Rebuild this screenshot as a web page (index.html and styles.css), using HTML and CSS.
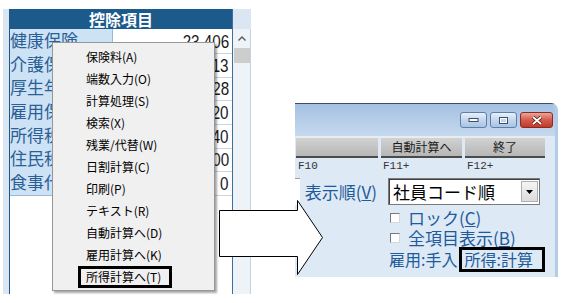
FILE: index.html
```html
<!DOCTYPE html>
<html lang="ja">
<head>
    <meta charset="UTF-8">
    <title>所得計算へ</title>
    <link rel="stylesheet" href="styles.css">
</head>
<body>
<div class="stage">
    <div class="sheet">
        <div class="ledger">
            <div class="ledger-head">控除項目</div>
            <div class="ledger-row"><span class="item">健康保険</span><span class="amount"><span>23,406</span></span></div>
            <div class="ledger-row"><span class="item">介護保険</span><span class="amount"><span>1,613</span></span></div>
            <div class="ledger-row"><span class="item">厚生年金</span><span class="amount"><span>42,828</span></span></div>
            <div class="ledger-row"><span class="item">雇用保険</span><span class="amount"><span>3,120</span></span></div>
            <div class="ledger-row"><span class="item">所得税</span><span class="amount"><span>6,440</span></span></div>
            <div class="ledger-row"><span class="item">住民税</span><span class="amount"><span>12,600</span></span></div>
            <div class="ledger-row"><span class="item">食事代</span><span class="amount"><span>0</span></span></div>
        </div>
        <div class="vscroll">
            <svg width="8" height="5" viewBox="0 0 8 5"><path d="M0.5 4.5 L4 1 L7.5 4.5" fill="none" stroke="#5a5a5a" stroke-width="1.4"/></svg>
            <span class="vscroll-thumb"></span>
        </div>
    </div>

    <div class="win">
        <div class="titlebar">
            <span class="cap-btn">
                <svg width="11" height="6" viewBox="0 0 11 6"><rect x="1" y="1.5" width="9" height="3" fill="#fff" stroke="#3d4f66"/></svg>
            </span>
            <span class="cap-btn">
                <svg width="11" height="9" viewBox="0 0 11 9"><rect x="1.5" y="1.5" width="8" height="6" fill="none" stroke="#3d4f66"/><rect x="2.5" y="2.5" width="6" height="4" fill="none" stroke="#fff"/></svg>
            </span>
            <span class="cap-btn cap-close">
                <svg width="12" height="9" viewBox="0 0 12 9"><path d="M2 1 L10 8 M10 1 L2 8" stroke="#5a1a14" stroke-width="3.4"/><path d="M2 1 L10 8 M10 1 L2 8" stroke="#fff" stroke-width="1.8"/></svg>
            </span>
        </div>
        <div class="fkeys">
            <div class="fkey fkey-10"><div class="fkey-btn"></div><div class="fkey-code">F10</div></div>
            <div class="fkey fkey-11"><div class="fkey-btn">自動計算へ</div><div class="fkey-code">F11+</div></div>
            <div class="fkey fkey-12"><div class="fkey-btn">終了</div><div class="fkey-code">F12+</div></div>
        </div>
        <div class="win-body">
            <div class="sort-label">
                <span class="clipped"></span>
                <span>表示順(<u>V</u>)</span>
            </div>
            <div class="combo">
                <span class="combo-text">社員コード順</span>
                <span class="combo-drop">
                    <svg width="7" height="4" viewBox="0 0 7 4"><path d="M0 0 H7 L3.5 4 Z" fill="#000"/></svg>
                </span>
            </div>
            <div class="opts">
                <div class="opt"><span class="check"></span><span>ロック(<u>C</u>)</span></div>
                <div class="opt"><span class="check"></span><span>全項目表示(<u>B</u>)</span></div>
                <div class="status">
                    <span>雇用:手入</span>
                    <span class="status-mark">所得:計算</span>
                </div>
            </div>
        </div>
    </div>

    <ul class="ctx-menu">
        <li>保険料(A)</li>
        <li>端数入力(O)</li>
        <li>計算処理(S)</li>
        <li>検索(X)</li>
        <li>残業/代替(W)</li>
        <li>日割計算(C)</li>
        <li>印刷(P)</li>
        <li>テキスト(R)</li>
        <li>自動計算へ(D)</li>
        <li>雇用計算へ(K)</li>
        <li><span class="marked">所得計算へ(T)</span></li>
    </ul>

    <svg class="arrow" width="106" height="78" viewBox="0 0 106 78">
        <polygon points="1.5,11.5 79.5,11.5 79.5,1.5 104.5,38.5 79.5,75.5 79.5,57.5 1.5,57.5" fill="#fff" stroke="#000" stroke-width="1"/>
    </svg>
</div>
</body>
</html>
```

FILE: styles.css
```css
body {
    margin: 0;
    background-color: #fff;
    font-family: "Noto Sans CJK JP", sans-serif;
}
.stage {
    position: relative;
    width: 588px;
    height: 303px;
    display: flex;
    align-items: flex-start;
    overflow: hidden;
}

/* left: deduction sheet */
.sheet {
    display: flex;
    margin: 9px 0 0 3px;
    height: 285px;
    padding-left: 6px;
    background-color: #dae7f3;
}
.ledger {
    width: 222px;
    border-left: 1px solid #1d578a;
    border-right: 1px solid #3f6f9e;
    background-color: #fff;
}
.ledger-head {
    height: 20px;
    background-color: #1b5a8b;
    color: #fff;
    font-weight: bold;
    font-size: 16px;
    line-height: 20px;
    text-align: center;
}
.ledger-row {
    display: grid;
    grid-template-columns: 103px 1fr;
    height: 23.7px;
}
.item {
    background-color: #cde2f5;
    border-right: 1px solid #9bb8d6;
    border-bottom: 1px solid #9bb8d6;
    font-size: 17px;
    line-height: 22px;
    color: #2b5f96;
    white-space: nowrap;
}
.amount {
    border-bottom: 1px solid #c5d6e8;
    text-align: right;
    padding-right: 3px;
}
.amount span {
    display: inline-block;
    font-family: "Liberation Sans", sans-serif;
    font-size: 19px;
    line-height: 23px;
    color: #1a1a1a;
    transform: scaleX(0.8);
    transform-origin: right center;
}
.vscroll {
    width: 17px;
    margin-top: 20px;
    align-self: stretch;
    display: flex;
    flex-direction: column;
    align-items: center;
    padding-top: 7px;
    background-color: #eef3f8;
    border-right: 1px solid #c3d3e3;
}
.vscroll svg {
    display: block;
}
.vscroll-thumb {
    width: 16px;
    height: 15px;
    margin-top: 7px;
    background-color: #cdcdcd;
}

/* context menu */
.ctx-menu {
    position: absolute;
    left: 52px;
    top: 42px;
    width: 161px;
    margin: 0;
    padding: 3px 0 2px;
    list-style: none;
    background-color: #f0f0f0;
    border: 1px solid #979797;
    box-shadow: 2px 2px 2px rgba(0, 0, 0, 0.35);
    font-size: 12px;
    color: #000;
}
.ctx-menu li {
    height: 22px;
    line-height: 22px;
    padding-left: 33px;
}
.ctx-menu .marked {
    display: inline-block;
    vertical-align: top;
    line-height: 16px;
    margin-left: -8px;
    padding: 0 8px 0 5px;
    border: 3px solid #000;
}

/* right: window */
.win {
    width: 263px;
    height: 174px;
    margin: 103px 0 0 44px;
    box-sizing: border-box;
    display: flex;
    flex-direction: column;
    overflow: hidden;
    background-color: #dde9f5;
    border-top: 1px solid #404d5c;
    border-right: 3px solid #b3cbe5;
    border-top-right-radius: 7px;
}
.titlebar {
    height: 33px;
    box-sizing: border-box;
    display: flex;
    justify-content: flex-end;
    gap: 3px;
    padding: 8px 2px 0 0;
    background: linear-gradient(#a4c1e3, #c6d9ee);
    border-bottom: 1px solid #e4edf6;
}
.cap-btn {
    width: 27px;
    height: 16px;
    box-sizing: border-box;
    display: flex;
    align-items: center;
    justify-content: center;
    border: 1px solid #5e7fa8;
    border-radius: 3px;
    background: linear-gradient(#e8f0fa, #c3d6ee 50%, #a9c3e4);
}
.cap-close {
    width: 33px;
    border-color: #8a2b22;
    background: linear-gradient(#eaa597, #d35c4d 50%, #c23a2b);
}
.fkeys {
    display: flex;
    gap: 3px;
    padding-left: 1px;
}
.fkey-10 { width: 82px; }
.fkey-11 { width: 81px; }
.fkey-12 { width: 80px; }
.fkey-btn {
    height: 18px;
    background: linear-gradient(#d2d2d2, #b6b6b6);
    border-top: 1px solid #ececec;
    border-bottom: 2px solid #4a4a4a;
    font-size: 12px;
    line-height: 18px;
    text-align: center;
    color: #1a1a1a;
}
.fkey-code {
    margin-top: 1px;
    padding-left: 2px;
    font-family: "Liberation Mono", monospace;
    font-size: 11px;
    line-height: 14px;
    color: #333;
}
.win-body {
    display: grid;
    grid-template-columns: 93px 1fr;
    padding-top: 5px;
    color: #1f5b9a;
    font-size: 17px;
}
.sort-label {
    height: 27px;
    display: flex;
    align-items: center;
    justify-content: space-between;
    padding-right: 11px;
    line-height: 20px;
}
.clipped {
    width: 5px;
    align-self: stretch;
    background-color: #fff;
    border-top: 1px solid #a0a0a0;
}
.combo {
    width: 152px;
    height: 27px;
    box-sizing: border-box;
    display: flex;
    align-items: center;
    justify-content: space-between;
    background-color: #fff;
    border: 1px solid #7a7a7a;
    box-shadow: inset 1px 1px #404040;
    color: #000;
    line-height: 22px;
    padding-left: 4px;
}
.combo-drop {
    width: 17px;
    height: 21px;
    margin-right: 1px;
    display: flex;
    align-items: center;
    justify-content: center;
    background: linear-gradient(#f4f4f4, #dcdcdc);
    border: 1px solid #b0b0b0;
    box-sizing: border-box;
}
.opts {
    grid-column: 2;
    padding-top: 3px;
}
.opt {
    height: 20px;
    display: flex;
    align-items: center;
    gap: 8px;
    padding-left: 2px;
    line-height: 20px;
}
.check {
    width: 10px;
    height: 10px;
    box-sizing: border-box;
    background-color: #fff;
    border: 1px solid;
    border-color: #777 #d8d8d8 #d8d8d8 #777;
}
.status {
    height: 25px;
    margin-top: -1px;
    display: flex;
    align-items: center;
    padding-left: 1px;
    font-size: 16px;
    line-height: 19px;
}
.status-mark {
    width: 86px;
    height: 25px;
    box-sizing: border-box;
    margin-left: 2px;
    padding-left: 2px;
    border: 3px solid #000;
}

.arrow {
    position: absolute;
    left: 218px;
    top: 199px;
}
```
